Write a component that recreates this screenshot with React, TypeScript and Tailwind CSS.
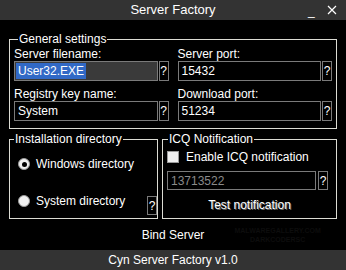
const HelpButton = ({ className = "" }: { className?: string }) => (
  <div
    className={`flex w-[10px] items-center justify-center border border-[#7a7a7a] text-[12px] leading-none text-white ${className}`}
  >
    ?
  </div>
);

const Field = ({
  label,
  value,
  selected,
}: {
  label: string;
  value: string;
  selected?: boolean;
}) => (
  <div className="flex flex-col">
    <div className="h-[14px] text-[12px] leading-[14px] text-white">{label}</div>
    <div className="flex h-[20px] gap-[1px]">
      <div
        className={`flex flex-1 items-center border border-[#7a7a7a] px-[1px] text-[12px] ${
          selected ? "bg-[#3a3a3a]" : "bg-black"
        }`}
      >
        {selected ? (
          <span className="bg-[#3169c6] px-[2px] leading-[16px] text-white">{value}</span>
        ) : (
          <span className="px-[2px] text-white">{value}</span>
        )}
      </div>
      <HelpButton />
    </div>
  </div>
);

const Radio = ({ checked, label }: { checked?: boolean; label: string }) => (
  <div className="flex items-center gap-[6px] pl-[8px]">
    <div className="flex h-[12px] w-[12px] items-center justify-center rounded-full border border-[#9a9a9a] bg-[#f0f0f0]">
      {checked && <div className="h-[5px] w-[5px] rounded-full bg-black" />}
    </div>
    <span className="text-[12px] text-white">{label}</span>
  </div>
);

export default function App() {
  return (
    <div className="flex h-[270px] w-[346px] flex-col bg-black font-['Liberation_Sans',Arial,sans-serif] text-white">
      {/* title bar */}
      <div className="flex h-[20px] items-center bg-[#333333] text-[13px]">
        <div className="flex-1 pl-[46px] text-center">Server Factory</div>
        <div className="flex w-[46px] items-center gap-[12px] pl-[8px]">
          <span className="mt-[2px] text-[12px]">_</span>
          <svg width="10" height="10" viewBox="0 0 10 10">
            <path d="M1 1L9 9M9 1L1 9" stroke="white" strokeWidth="1.2" />
          </svg>
        </div>
      </div>

      <div className="flex flex-1 flex-col px-[9px] pt-[12px]">
        <fieldset className="border border-[#dcdcd4] px-[4px] pb-[7px]">
          <legend className="ml-[4px] px-[1px] text-[12px] leading-[14px]">General settings</legend>
          <div className="grid grid-cols-2 gap-x-[9px] gap-y-[6px] pt-[1px]">
            <Field label="Server filename:" value="User32.EXE" selected />
            <Field label="Server port:" value="15432" />
            <Field label="Registry key name:" value="System" />
            <Field label="Download port:" value="51234" />
          </div>
        </fieldset>

        <div className="mt-[3px] flex gap-[4px]">
          <fieldset className="flex h-[87px] w-[149px] flex-col border border-[#dcdcd4]">
            <legend className="ml-[4px] px-[1px] text-[12px] leading-[14px]">Installation directory</legend>
            <div className="flex flex-1 flex-col">
              <div className="pt-[9px]">
                <Radio checked label="Windows directory" />
              </div>
              <div className="mt-[19px] flex items-end justify-between">
                <div className="mb-[5px]">
                  <Radio label="System directory" />
                </div>
                <HelpButton className="h-[19px]" />
              </div>
            </div>
          </fieldset>

          <fieldset className="flex h-[87px] flex-1 flex-col border border-[#dcdcd4] px-[4px]">
            <legend className="ml-[1px] px-[1px] text-[12px] leading-[14px]">ICQ Notification</legend>
            <div className="flex items-center gap-[7px] pt-[2px]">
              <div className="h-[12px] w-[12px] border border-[#9a9a9a] bg-[#f0f0f0]" />
              <span className="text-[12px]">Enable ICQ notification</span>
            </div>
            <div className="mt-[5px] flex h-[19px] gap-[2px] pr-[4px]">
              <div className="flex flex-1 items-center border border-[#7a7a7a] px-[3px] text-[12px] text-[#8a8a8a]">
                13713522
              </div>
              <HelpButton />
            </div>
            <div className="mt-[6px] text-center text-[12px] [text-shadow:1px_1px_0_#6a6a6a]">
              Test notification
            </div>
          </fieldset>
        </div>

        <div className="grid flex-1 grid-cols-[1fr_auto_1fr] items-center">
          <div />
          <div className="text-[12px]">Bind Server</div>
          <div className="pl-[14px] text-center text-[7px] font-bold leading-[9px] text-[#0d0d0d]">
            MALWAREGALLERY.COM
            <br />
            DARKCODERSC
          </div>
        </div>
      </div>

      {/* status bar */}
      <div className="flex h-[20px] items-center justify-center bg-[#333333] text-[12px]">
        Cyn Server Factory v1.0
      </div>
    </div>
  );
}
